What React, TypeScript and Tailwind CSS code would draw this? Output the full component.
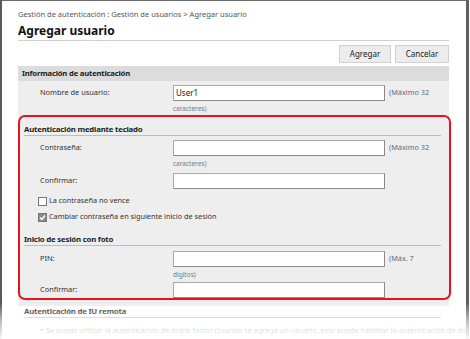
import React from "react";

const font = { fontFamily: '"Noto Sans", "Open Sans", sans-serif' };

function Input({ value = "" }: { value?: string }) {
  return (
    <div className="w-[212px] h-[16px] bg-white border border-[#a8a8a8] border-r-[#8a8a8a] border-b-[#8a8a8a] flex items-center pl-[2px] text-[8px] text-[#222] leading-none">
      {value}
    </div>
  );
}

function Row({ label, value, note, sub, mt, inBox }: { label: string; value?: string; note?: string; sub?: string; mt: string; inBox?: boolean }) {
  return (
    <div className={mt}>
      <div className="flex items-center h-[16px]">
        <div className={`${inBox ? "ml-[20px]" : "ml-[22px]"} w-[133px] text-[7.4px] text-[#333] leading-none`}>{label}</div>
        <Input value={value} />
        {note && <div className="ml-[4px] text-[7.3px] text-[#5b6b82] leading-none">{note}</div>}
      </div>
      {sub && <div className={`${inBox ? "ml-[153px]" : "ml-[155px]"} mt-[3px] text-[6.5px] leading-[9px] text-[#6b7a90]`}>{sub}</div>}
    </div>
  );
}

function Heading({ text, mt, inBox }: { text: string; mt: string; inBox?: boolean }) {
  return (
    <div className={`${mt} ${inBox ? "ml-[4px]" : "ml-[6px]"} w-[417px] border-b border-[#bdbdbd]`}>
      <div className="text-[7.8px] font-bold tracking-[-0.2px] text-[#222] leading-[12px]">{text}</div>
    </div>
  );
}

export default function App() {
  return (
    <div className="w-[470px] h-[339px] bg-white relative overflow-hidden" style={font}>
      <div className="w-[469px] h-[339px] overflow-hidden border-l-2 border-t border-r-[3px] border-l-[#5a5a5a] border-t-[#6a6a6a] border-r-[#5f5f5f] pl-[16px] pt-[7px]">
        <div className="text-[7.5px] text-[#555] leading-[12px]">
          Gestión de autenticación : Gestión de usuarios &gt; Agregar usuario
        </div>
        <div className="mt-[3px] w-[431px] border-b border-[#d0d0d0] pb-[1px]">
          <div className="text-[12px] font-bold text-[#111] leading-[16px]">Agregar usuario</div>
        </div>
        <div className="w-[431px] flex justify-end gap-[4px] mt-[4px]">
          <div className="w-[52px] h-[18px] bg-[#ececec] border border-[#d2d2d2] flex items-center justify-center text-[8px] text-[#222]">Agregar</div>
          <div className="w-[54px] h-[18px] bg-[#ececec] border border-[#d2d2d2] flex items-center justify-center text-[8px] text-[#222]">Cancelar</div>
        </div>
        <div className="w-[431px] mt-[3px] bg-[#eeeeee] h-[240px]">
          <div className="h-[15px] bg-[#dcdcdc] flex items-center pl-[4px] text-[7.7px] font-bold tracking-[-0.2px] text-[#222]">
            Información de autenticación
          </div>
          <Row mt="mt-[4px]" label="Nombre de usuario:" value="User1" note="(Máximo 32" sub="caracteres)" />
          <div className="mt-[2px] w-[433px] h-[185px] border-2 border-[#e8141c] rounded-[7px] pt-[6px]">
            <Heading inBox mt="mt-0" text="Autenticación mediante teclado" />
            <Row inBox mt="mt-[4px]" label="Contraseña:" note="(Máximo 32" sub="caracteres)" />
            <Row inBox mt="mt-[5px]" label="Confirmar:" />
            <div className="mt-[7px] ml-[18px] flex items-center h-[10px] text-[7.3px] text-[#333] leading-none">
              <div className="w-[9px] h-[9px] bg-white border border-[#777] mr-[2px]" />
              La contraseña no vence
            </div>
            <div className="mt-[6px] ml-[18px] flex items-center h-[10px] text-[7.3px] text-[#333] leading-none">
              <div className="w-[9px] h-[9px] bg-[#8a8a8a] border border-[#777] mr-[2px] flex items-center justify-center">
                <svg width="7" height="7" viewBox="0 0 7 7"><path d="M1 3.6 L2.8 5.4 L6 1.5" stroke="white" strokeWidth="1.4" fill="none" /></svg>
              </div>
              Cambiar contraseña en siguiente inicio de sesión
            </div>
            <Heading inBox mt="mt-[11px]" text="Inicio de sesión con foto" />
            <Row inBox mt="mt-[5px]" label="PIN:" note="(Máx. 7" sub="dígitos)" />
            <Row inBox mt="mt-[3px]" label="Confirmar:" />
          </div>
          <Heading mt="mt-[5px]" text="Autenticación de IU remota" />
          <div className="mt-[7px] ml-[22px] w-[426px] overflow-hidden whitespace-nowrap text-[7.3px] text-[#666] leading-[10px]">
            * Se puede utilizar la autenticación de doble factor (cuando se agrega un usuario, este puede habilitar la autenticación de doble factor)
          </div>
        </div>
      </div>
      <div className="absolute left-0 right-0 bottom-0 h-[36px] bg-gradient-to-b from-white/0 via-white/60 to-white/95" />
    </div>
  );
}
